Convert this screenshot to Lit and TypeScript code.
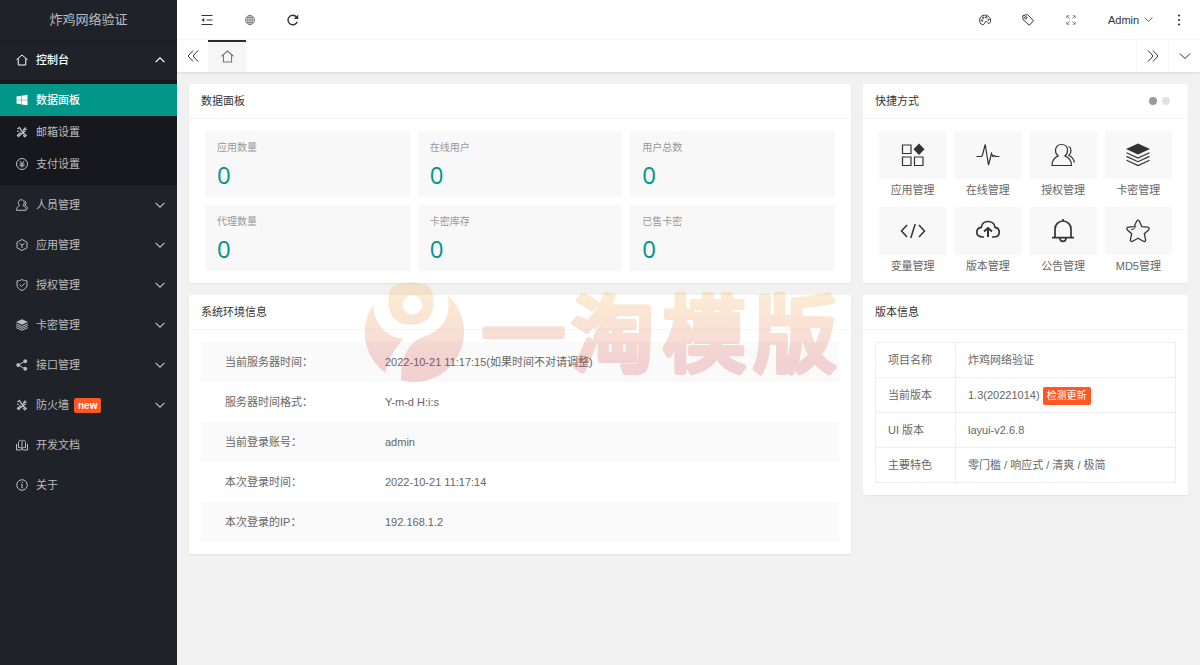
import { LitElement, html, css, svg, nothing, SVGTemplateResult } from "lit";
import { customElement, property, state } from "lit/decorators.js";
import { classMap } from "lit/directives/class-map.js";

const icons: Record<string, SVGTemplateResult> = {
  home: svg`<path d="M1 11.500 12 2l11 9.500M4.500 9v13h15V9"/>`,
  windows: svg`<g fill="currentColor" stroke="none"><path d="M1 5l9-1.500v8H1zM11 3.300 23 1.500v10H11zM1 12.500h9v8l-9-1.500zM11 12.500h12v10l-12-1.700z"/></g>`,
  tools: svg`<path stroke-width="2.600" d="M3 6l4-3 3 5 10 12M19.500 11.500l-3-1L5 21l-2-2.500L9.500 13"/><path stroke-width="2.400" d="M14 9l5-6M17 8l4.500-2M2 10l4 1M14.500 17.500l2.500 4 4.500-3.500"/>`,
  yen: svg`<circle cx="12" cy="12" r="11"/><path d="M7.500 5.500l4.500 6 4.500-6M12 12v7M7 12h10M7 15.500h10"/>`,
  users: svg`<path d="M10.500 1.500c3.600 0 6 2.400 6 6 0 2.400-1 4.300-2.600 5.400 3.800 1.600 6.600 4.800 6.600 9.600H1c0-4.800 2.500-8 6.200-9.600C5.500 11.800 4.500 9.900 4.500 7.500c0-3.600 2.400-6 6-6z"/><path d="M17.500 3.500c3 1 3.500 6 .300 8.800 3.200 1.500 4.900 3.900 5.700 7.200"/>`,
  cube: svg`<path d="M12 1l10 5.500v11L12 23 2 17.500v-11zM7 9l5 3 5-3M12 12v6"/>`,
  shield: svg`<path d="M12 1c3 2 6.500 2.700 10 2.700V12c0 5-4.500 9-10 11-5.500-2-10-6-10-11V3.700C5.500 3.700 9 3 12 1zM7 11l4 4 6.500-6.500"/>`,
  layers: svg`<path fill="currentColor" stroke="none" d="M12 .500 24 6 12 11.500 0 6z"/><path d="M.500 9.700 12 15l11.500-5.300M.500 13.400 12 18.700l11.500-5.300M.500 17.200 12 22.500l11.500-5.300"/>`,
  share: svg`<g fill="currentColor"><circle cx="4.500" cy="12" r="3"/><circle cx="18.500" cy="4.500" r="3"/><circle cx="18.500" cy="19.500" r="3"/></g><path d="M18 4.500 4.500 12 18 19.500"/>`,
  book: svg`<path d="M12 4.500V20M5 17.500V7c0-5 5-5.500 7-2.500 2-3 7-2.500 7 2.500v10.500M1 10v12h8l3-2 3 2h8V10M5 17.500c3-1 5-.500 7 1.500 2-2 4-2.500 7-1.500"/>`,
  info: svg`<circle cx="12" cy="12" r="10.500"/><path d="M13 5.500l-.500 2.500M10 11h2.500l-1 6.500H14"/>`,
  down: svg`<path d="M1.500 7 12 17 22.500 7"/>`,
  up: svg`<path d="M1.500 17 12 7l10.500 10"/>`,
  collapse: svg`<path d="M1 3h22M11 12h12M1 21h22"/><path fill="currentColor" stroke="none" d="M6.500 8v8L1 12z"/>`,
  globe: svg`<circle cx="12" cy="12" r="11"/><ellipse cx="12" cy="12" rx="5.500" ry="11"/><path d="M12 1v22M1 12h22M3 6.500h18M3 17.500h18"/>`,
  refresh: svg`<path stroke-width="2.800" d="M20.500 15.500A9.500 9.500 0 1 1 19 6"/><path fill="currentColor" stroke="none" d="M22.500 1v9h-9z"/>`,
  palette: svg`<path d="M4 20C-1 14 1 5 8 3c7-2.500 14 2 15 9 .500 4-1 7-3.500 7-3 0-2-4-5-4-4 0-2 4-5 6-2 1.200-4 .500-5.500-1z"/><circle cx="6" cy="13" r="1.500"/><circle cx="8.500" cy="7.500" r="1.500"/><circle cx="14.500" cy="6.500" r="1.500"/><circle cx="19" cy="11.500" r="1.200"/>`,
  tag: svg`<path stroke-linejoin="round" d="M1.500 3.500 11 1l12 12.500-8.500 9L2 11z"/><circle cx="7.500" cy="7.500" r="2.300"/>`,
  full: svg`<path d="M2 8V2h6M2 2l7 7M16 2h6v6M22 2l-7 7M2 16v6h6M2 22l7-7M22 16v6h-6M22 22l-7-7"/>`,
  more: svg`<g fill="currentColor" stroke="none"><circle cx="12" cy="3" r="2.200"/><circle cx="12" cy="12" r="2.200"/><circle cx="12" cy="21" r="2.200"/></g>`,
  prev: svg`<path d="M12 1 2 12l10 11M22 1 12 12l10 11"/>`,
  next: svg`<path d="M2 1l10 11L2 23M12 1l10 11-10 11"/>`,
  apps: svg`<path d="M1.500 2h8.500v8.500H1.500zM1.500 14h8.500v8.500H1.500zM13.500 14h8.500v8.500h-8.500z"/><path fill="currentColor" stroke="none" d="M18 .500 23.500 6.200 18 12l-5.500-5.800z"/>`,
  pulse: svg`<path d="M.500 13.500H5q1 0 1.500-1.500L9.200 1.500 12.500 22l3-11.500 1.500 3 1.500-1 1 1h4"/>`,
  code: svg`<path stroke-width="1.500" d="M6 6 .500 12 6 18M18 6l5.500 6L18 18M14.200 5 9.800 19"/>`,
  cloud: svg`<path stroke-width="1.700" d="M8 18H6.500C3 18 .800 16 .800 13.200s2-4.600 4.500-4.900C5.800 4.800 8.500 2.500 12 2.500s6.500 2 7 5.800c2.200.300 4.200 2.100 4.200 4.900S21 18 17.500 18H16"/><path stroke-width="2" d="M12 18V9.500M8 12.500 12 9l4 3.500"/>`,
  bell: svg`<path stroke-width="1.700" d="M4 18.500V10a8 8 0 0 1 16 0v8.500M1 18.700h22M12 2V0"/><path stroke-width="1.700" d="M9 19c0 4.500 6 4.500 6 0"/>`,
  star: svg`<path stroke-width="1.300" stroke-linejoin="round" d="M12 1.200c.800 0 1.200.500 1.500 1.200l2.300 5.200 5.800.600c1.700.200 2 1.700 1 2.700l-4.300 3.900 1.300 5.800c.300 1.600-1 2.400-2.300 1.600L12 19.200l-5.300 3c-1.300.800-2.600 0-2.300-1.600l1.300-5.800-4.300-3.900c-1-1-.700-2.500 1-2.700l5.800-.600 2.300-5.200c.300-.700.700-1.200 1.500-1.200z"/><path stroke-width="1" d="M5 10.500c2.500 0 4-1 5-3.500"/>`,
};

@customElement("app-icon")
export class AppIcon extends LitElement {
  static styles = css`
    :host {
      display: inline-flex;
      flex: none;
      width: 12px;
      height: 12px;
    }
    .glyph {
      width: 100%;
      height: 100%;
      fill: none;
      stroke: currentColor;
      overflow: visible;
    }
  `;
  @property() name = "home";
  @property({ type: Number }) weight = 2;
  render() {
    return html`<svg class="glyph" viewBox="0 0 24 24" stroke-width=${this.weight} aria-hidden="true">
      ${icons[this.name]}
    </svg>`;
  }
}

@customElement("app-watermark")
export class AppWatermark extends LitElement {
  static styles = css`
    :host {
      display: block;
      pointer-events: none;
    }
    .art {
      display: block;
      width: 100%;
      opacity: 0.2;
      overflow: visible;
    }
    .words {
      font: 400 250px "Noto Sans CJK SC", sans-serif;
      stroke-width: 18px;
      stroke-linejoin: round;
      stroke-linecap: round;
    }
  `;
  render() {
    return html`<svg class="art" viewBox="0 0 1500 345" aria-hidden="true">
      <defs>
        <linearGradient id="warm" gradientUnits="userSpaceOnUse" x1="0" y1="60" x2="0" y2="260">
          <stop offset="0" stop-color="#f5a52d" />
          <stop offset="1" stop-color="#d23237" />
        </linearGradient>
      </defs>
      <g fill="url(#warm)">
        <path
          fill-rule="evenodd"
          d="M125 38C145 16 220 16 240 38C256 62 254 104 240 124C216 158 150 158 127 124C110 100 112 60 125 38zM187 61a29 29 0 1 0 .1 0z"
        />
        <path d="M70 88C68 135 105 190 160 191C140 215 112 250 107 294A150 150 0 0 1 70 88z" />
        <path d="M293 60A150 150 0 0 1 153 316C152 260 168 206 218 186C262 172 308 140 293 60z" />
        <text class="words" y="269" stroke="url(#warm)">
          <tspan x="395">一</tspan><tspan x="664">淘</tspan><tspan x="938">模</tspan><tspan x="1210">版</tspan>
        </text>
      </g>
    </svg>`;
  }
}

interface MenuItem {
  icon: string;
  label: string;
  arrow?: boolean;
  badge?: string;
}

const subMenu: MenuItem[] = [
  { icon: "windows", label: "数据面板" },
  { icon: "tools", label: "邮箱设置" },
  { icon: "yen", label: "支付设置" },
];

const menu: MenuItem[] = [
  { icon: "users", label: "人员管理", arrow: true },
  { icon: "cube", label: "应用管理", arrow: true },
  { icon: "shield", label: "授权管理", arrow: true },
  { icon: "layers", label: "卡密管理", arrow: true },
  { icon: "share", label: "接口管理", arrow: true },
  { icon: "tools", label: "防火墙", arrow: true, badge: "new" },
  { icon: "book", label: "开发文档" },
  { icon: "info", label: "关于" },
];

const stats = ["应用数量", "在线用户", "用户总数", "代理数量", "卡密库存", "已售卡密"];

const shortcuts = [
  ["apps", "应用管理"],
  ["pulse", "在线管理"],
  ["users", "授权管理"],
  ["layers", "卡密管理"],
  ["code", "变量管理"],
  ["cloud", "版本管理"],
  ["bell", "公告管理"],
  ["star", "MD5管理"],
];

const system = [
  ["当前服务器时间：", "2022-10-21 11:17:15(如果时间不对请调整)"],
  ["服务器时间格式：", "Y-m-d H:i:s"],
  ["当前登录账号：", "admin"],
  ["本次登录时间：", "2022-10-21 11:17:14"],
  ["本次登录的IP：", "192.168.1.2"],
];

const version = [
  ["项目名称", "炸鸡网络验证"],
  ["当前版本", "1.3(20221014)"],
  ["UI 版本", "layui-v2.6.8"],
  ["主要特色", "零门槛 / 响应式 / 清爽 / 极简"],
];

@customElement("app-root")
export class AppRoot extends LitElement {
  static styles = css`
    :host {
      display: grid;
      grid-template-columns: 177px minmax(0, 1fr);
      min-height: 100vh;
      background: #f1f1f1;
      color: #666;
      font: 11px/20px "Liberation Sans", "Noto Sans CJK SC", sans-serif;
    }
    * {
      box-sizing: border-box;
    }
    a {
      color: inherit;
      text-decoration: none;
    }
    button {
      border: 0;
      padding: 0;
      background: none;
      color: inherit;
      font: inherit;
      cursor: pointer;
    }
    .side {
      background: #20222a;
      color: #bcbdbf;
    }
    .brand {
      height: 40px;
      line-height: 40px;
      text-align: center;
      font-size: 13px;
      box-shadow: 0 1px 2px rgba(0, 0, 0, 0.2);
    }
    .item {
      display: flex;
      align-items: center;
      height: 40px;
      padding: 0 12px 0 16px;
    }
    .item .text {
      margin-left: 8px;
    }
    .item .arrow {
      width: 10px;
      height: 10px;
      margin-left: auto;
    }
    .item.open {
      color: #fff;
      font-weight: 500;
    }
    .sub {
      padding: 4px 0 5px;
      background: #16181d;
    }
    .sub .item {
      height: 32px;
    }
    .sub .item.current {
      background: #009688;
      color: #fff;
      font-weight: 500;
    }
    .badge {
      padding: 0 4px;
      border-radius: 2px;
      background: #ff5722;
      color: #fff;
      font-size: 10px;
      line-height: 18px;
    }
    .badge.small {
      margin-left: 5px;
      line-height: 15px;
      font-weight: 700;
    }
    .top {
      display: flex;
      height: 40px;
      padding-left: 8px;
      background: #fff;
      color: #333;
      border-bottom: 1px solid #f6f6f6;
    }
    .tool {
      display: flex;
      align-items: center;
      justify-content: center;
      width: 43px;
    }
    .tool.user {
      justify-content: flex-start;
      width: 65px;
      padding-left: 16px;
      gap: 5px;
    }
    .tool .soft {
      width: 10px;
      height: 10px;
      color: #666;
    }
    .user .caret {
      width: 9px;
      height: 9px;
    }
    .spacer {
      flex: 1;
    }
    .tabs {
      display: flex;
      height: 32px;
      background: #fff;
      color: #333;
      box-shadow: 0 1px 2px rgba(0, 0, 0, 0.1);
    }
    .tab-btn {
      display: flex;
      align-items: center;
      justify-content: center;
      width: 32px;
      border-left: 1px solid #f6f6f6;
    }
    .tab-btn:first-child {
      width: 31px;
      border-left: 0;
    }
    .tab {
      display: flex;
      align-items: center;
      justify-content: center;
      width: 38px;
      box-shadow: inset 0 2px #292b34;
      background: #f6f6f6;
      color: #777;
    }
    .tab .house {
      width: 13px;
      height: 13px;
    }
    .main {
      position: relative;
      display: grid;
      grid-template-columns: 2fr 1fr;
      align-items: start;
      padding: 12px 6px;
    }
    .col {
      display: grid;
      gap: 12px;
      padding: 0 6px;
    }
    .card {
      border-radius: 2px;
      background: #fff;
      box-shadow: 0 1px 2px rgba(0, 0, 0, 0.06);
    }
    .head {
      display: flex;
      align-items: center;
      justify-content: space-between;
      height: 35px;
      padding: 0 18px 0 12px;
      border-bottom: 1px solid #f6f6f6;
      color: #333;
    }
    .title {
      margin: 0;
      font-size: 11px;
      font-weight: 400;
    }
    .dots {
      display: flex;
      gap: 5px;
    }
    .dot {
      width: 8px;
      height: 8px;
      border-radius: 50%;
      background: #e2e2e2;
    }
    .dot.on {
      background: #999;
    }
    .stats {
      display: grid;
      grid-template-columns: repeat(3, 1fr);
      gap: 8px;
      padding: 12px 16px;
    }
    .stat {
      height: 66px;
      padding: 8px 12px;
      background: #f8f8f8;
      color: #999;
    }
    .stat-name {
      margin: 0;
      font-size: 10px;
      line-height: 18px;
      font-weight: 400;
    }
    .stat-value {
      margin: 0;
      color: #009688;
      font: 400 24px/36px "Open Sans", "Noto Sans", sans-serif;
    }
    .shortcuts {
      display: grid;
      grid-template-columns: repeat(4, 1fr);
      gap: 8px;
      padding: 12px 16px 8px;
    }
    .shortcut {
      display: grid;
      gap: 2px;
      text-align: center;
      line-height: 18px;
    }
    .tile {
      display: grid;
      place-items: center;
      height: 48px;
      background: #f8f8f8;
      color: #333;
    }
    .tile .big {
      width: 24px;
      height: 24px;
    }
    .body {
      padding: 12px;
    }
    table {
      width: 100%;
      border-collapse: collapse;
    }
    th,
    td {
      font-weight: 400;
      text-align: left;
    }
    .system th,
    .system td {
      height: 40px;
      padding: 0 24px;
    }
    .system th {
      width: 160px;
      padding-right: 0;
    }
    .system tr:nth-child(odd) {
      background: #fafafa;
    }
    .version th,
    .version td {
      height: 35px;
      padding: 0 12px;
      border: 1px solid #eee;
    }
    .version th {
      width: 80px;
    }
    .watermark {
      position: absolute;
      left: 173px;
      top: 203px;
      width: 500px;
    }
  `;

  @state() private page = 0;

  private renderItem(item: MenuItem, current = false) {
    return html`<a href="#" class=${classMap({ item: true, current })}>
      <app-icon name=${item.icon}></app-icon>
      <span class="text">${item.label}</span>
      ${item.badge ? html`<span class="badge small">${item.badge}</span>` : nothing}
      ${item.arrow ? html`<app-icon class="arrow" name="down" weight="3"></app-icon>` : nothing}
    </a>`;
  }

  private renderTool(name: string, label: string, soft = false) {
    return html`<button class="tool" aria-label=${label}>
      <app-icon class=${classMap({ soft })} name=${name} weight=${soft ? 1.8 : 2}></app-icon>
    </button>`;
  }

  render() {
    return html`
      <aside class="side">
        <div class="brand">炸鸡网络验证</div>
        <nav>
          <a href="#" class="item open">
            <app-icon name="home"></app-icon><span class="text">控制台</span>
            <app-icon class="arrow" name="up" weight="3"></app-icon>
          </a>
          <div class="sub">${subMenu.map((m, i) => this.renderItem(m, i === 0))}</div>
          ${menu.map((m) => this.renderItem(m))}
        </nav>
      </aside>
      <div>
        <header class="top">
          ${this.renderTool("collapse", "侧边伸缩")} ${this.renderTool("globe", "前台", true)}
          ${this.renderTool("refresh", "刷新")}
          <span class="spacer"></span>
          ${this.renderTool("palette", "主题")} ${this.renderTool("tag", "便签")}
          ${this.renderTool("full", "全屏", true)}
          <button class="tool user">Admin <app-icon class="caret" name="down"></app-icon></button>
          ${this.renderTool("more", "更多")}
        </header>
        <div class="tabs">
          <button class="tab-btn" aria-label="向左"><app-icon name="prev"></app-icon></button>
          <a href="#" class="tab" aria-label="主页"><app-icon class="house" name="home"></app-icon></a>
          <span class="spacer"></span>
          <button class="tab-btn" aria-label="向右"><app-icon name="next"></app-icon></button>
          <button class="tab-btn" aria-label="展开"><app-icon name="down"></app-icon></button>
        </div>
        <main class="main">
          <div class="col">
            <section class="card">
              <div class="head"><h2 class="title">数据面板</h2></div>
              <div class="stats">
                ${stats.map(
                  (s) => html`<div class="stat">
                    <h3 class="stat-name">${s}</h3>
                    <p class="stat-value">0</p>
                  </div>`
                )}
              </div>
            </section>
            <section class="card">
              <div class="head"><h2 class="title">系统环境信息</h2></div>
              <div class="body">
                <table class="system">
                  <tbody>
                    ${system.map(([k, v]) => html`<tr><th scope="row">${k}</th><td>${v}</td></tr>`)}
                  </tbody>
                </table>
              </div>
            </section>
          </div>
          <div class="col">
            <section class="card">
              <div class="head">
                <h2 class="title">快捷方式</h2>
                <div class="dots">
                  ${[0, 1].map(
                    (n) => html`<button
                      class=${classMap({ dot: true, on: this.page === n })}
                      aria-label="第${n + 1}页"
                      @click=${() => (this.page = n)}
                    ></button>`
                  )}
                </div>
              </div>
              <div class="shortcuts">
                ${shortcuts.map(
                  ([icon, label]) => html`<a href="#" class="shortcut">
                    <span class="tile"><app-icon class="big" name=${icon} weight="1.2"></app-icon></span>
                    <span>${label}</span>
                  </a>`
                )}
              </div>
            </section>
            <section class="card">
              <div class="head"><h2 class="title">版本信息</h2></div>
              <div class="body">
                <table class="version">
                  <tbody>
                    ${version.map(
                      ([k, v], i) => html`<tr>
                        <th scope="row">${k}</th>
                        <td>${v} ${i === 1 ? html`<button class="badge">检测更新</button>` : nothing}</td>
                      </tr>`
                    )}
                  </tbody>
                </table>
              </div>
            </section>
          </div>
          <app-watermark class="watermark"></app-watermark>
        </main>
      </div>
    `;
  }
}
